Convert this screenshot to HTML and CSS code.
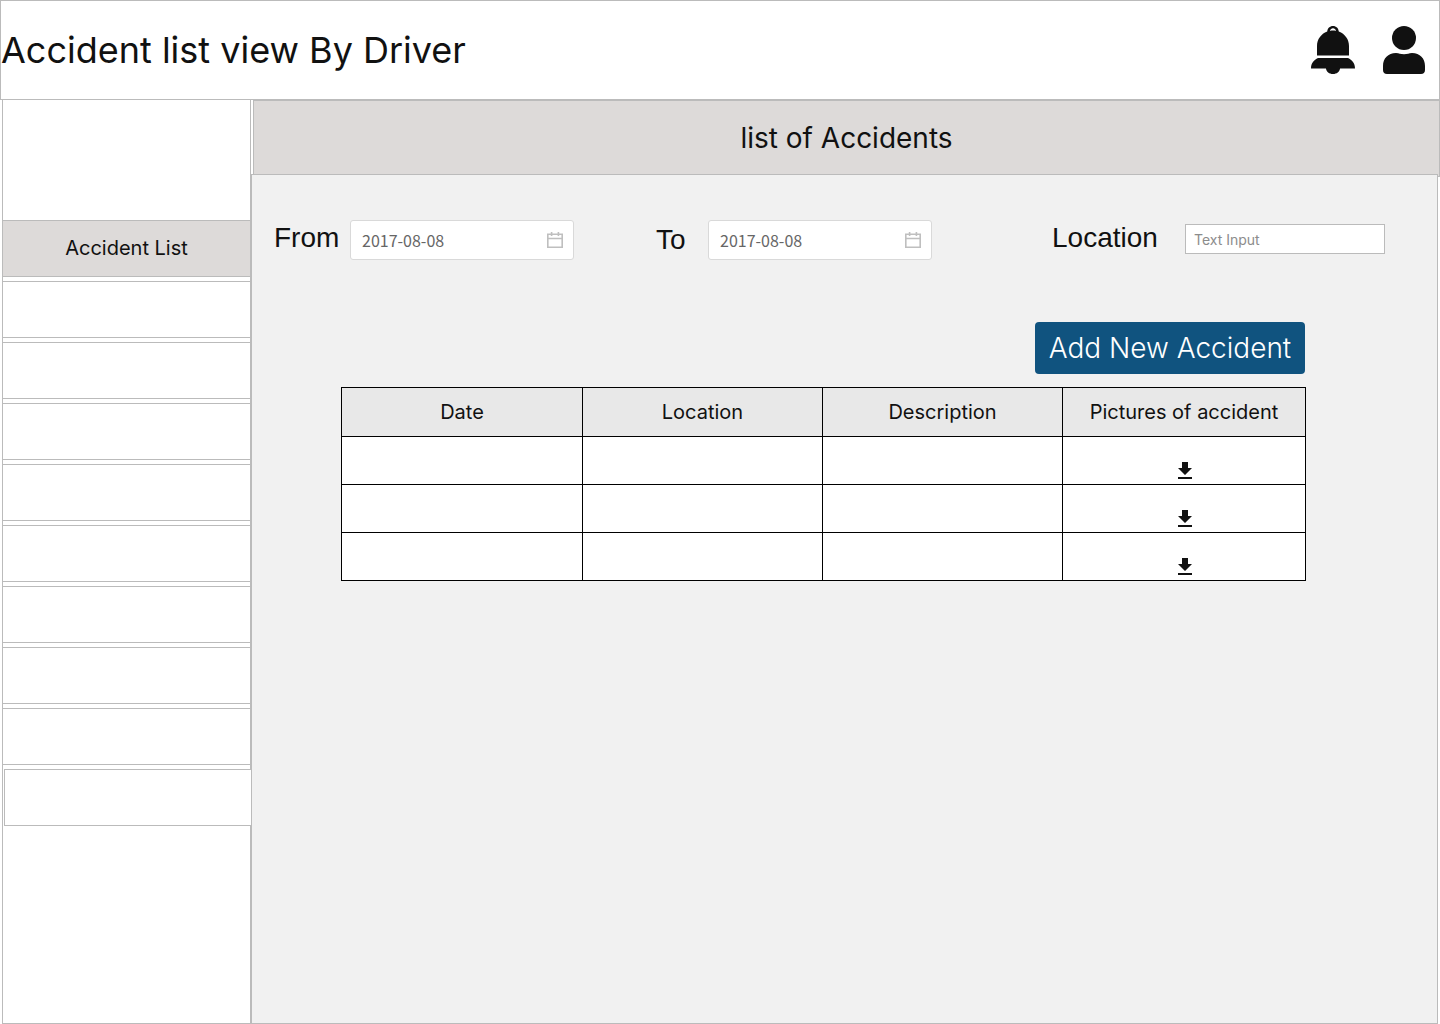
FILE: index.html
```html
<!DOCTYPE html>
<html lang="en">
<head>
<meta charset="utf-8">
<title>Accident list view By Driver</title>
<link rel="stylesheet" href="styles.css">
</head>
<body>
<svg class="sprite" aria-hidden="true">
  <symbol id="calendar" viewBox="0 0 16 16">
    <path fill="none" stroke="currentColor" stroke-width="1.6" d="M.8 2.300h14.400v12.900H.8zM.8 6.500h14.400M4.600 0v4M11.400 0v4"/>
  </symbol>
  <symbol id="download" viewBox="0 0 14 17">
    <path fill="currentColor" d="M4 0h6v6h4l-7 7-7-7h4zM0 15h14v2H0z"/>
  </symbol>
</svg>
<header class="topbar">
  <h1 class="topbar-title">Accident list view By Driver</h1>
  <div class="topbar-actions">
    <button class="icon-button" type="button" aria-label="Notifications">
      <svg width="44" height="48" viewBox="0 0 44 48" fill="currentColor">
        <path fill-rule="evenodd" d="M16.200 5.600C16.500 2.200 18.800 0 22 0s5.500 2.200 5.800 5.600C34 8 38 13.500 38 20v9.500H6V20C6 13.500 10 8 16.200 5.600zM19 5c2-.6 4-.6 6 0C24.600 3.200 23.500 2.300 22 2.300S19.400 3.200 19 5z"/>
        <path d="M7 32h30c4 2 7 5 7 10.500H29C28.600 45.800 25.800 48 22 48s-6.600-2.200-7-5.500H0C0 37 3 34 7 32z"/>
      </svg>
    </button>
    <button class="icon-button" type="button" aria-label="Profile">
      <svg width="42" height="48" viewBox="0 0 42 48" fill="currentColor">
        <circle cx="21" cy="12" r="12"/>
        <path d="M13 27c3 0 4.500 1.300 8 1.300S26 27 29 27c8 0 13 5.500 13 13v4c0 2.500-1.500 4-4 4H4c-2.500 0-4-1.500-4-4v-4c0-7.500 5-13 13-13z"/>
      </svg>
    </button>
  </div>
</header>
<div class="layout">
  <nav class="sidebar" aria-label="Main">
    <a class="nav-item nav-item-active" href="#accidents">Accident List</a>
    <div class="nav-item"></div>
    <div class="nav-item"></div>
    <div class="nav-item"></div>
    <div class="nav-item"></div>
    <div class="nav-item"></div>
    <div class="nav-item"></div>
    <div class="nav-item"></div>
    <div class="nav-item"></div>
    <div class="nav-item nav-item-last"></div>
  </nav>
  <main class="main" id="accidents">
    <h2 class="banner">list of Accidents</h2>
    <section class="panel">
      <form class="filters">
        <div class="field">
          <label class="field-label label-from" for="from">From</label>
          <div class="date-box">
            <input class="date-input" id="from" type="text" value="2017-08-08">
            <svg class="date-icon" width="16" height="16"><use href="#calendar"/></svg>
          </div>
        </div>
        <div class="field">
          <label class="field-label label-to" for="to">To</label>
          <div class="date-box">
            <input class="date-input" id="to" type="text" value="2017-08-08">
            <svg class="date-icon" width="16" height="16"><use href="#calendar"/></svg>
          </div>
        </div>
        <div class="field field-location">
          <label class="field-label label-location" for="location">Location</label>
          <input class="text-input" id="location" type="text" placeholder="Text Input">
        </div>
      </form>
      <div class="records">
        <button class="add-button" type="button">Add New Accident</button>
        <table class="table">
          <thead>
            <tr><th class="col-date">Date</th><th>Location</th><th>Description</th><th class="col-pictures">Pictures of accident</th></tr>
          </thead>
          <tbody>
            <tr><td></td><td></td><td></td><td><button class="download" type="button" aria-label="Download pictures"><svg width="14" height="17"><use href="#download"/></svg></button></td></tr>
            <tr><td></td><td></td><td></td><td><button class="download" type="button" aria-label="Download pictures"><svg width="14" height="17"><use href="#download"/></svg></button></td></tr>
            <tr><td></td><td></td><td></td><td><button class="download" type="button" aria-label="Download pictures"><svg width="14" height="17"><use href="#download"/></svg></button></td></tr>
          </tbody>
        </table>
      </div>
    </section>
  </main>
</div>
</body>
</html>
```
FILE: styles.css
```css
* { box-sizing: border-box; }

body {
  display: flex;
  flex-direction: column;
  min-height: 100vh;
  margin: 0;
  background: #fff;
  color: #111;
  font-family: Inter, "Liberation Sans", sans-serif;
}

button {
  padding: 0;
  border: 0;
  background: none;
  color: inherit;
  font-family: inherit;
  cursor: pointer;
}

svg { display: block; }

.sprite { display: none; }

.topbar {
  display: flex;
  align-items: center;
  justify-content: space-between;
  height: 100px;
  padding-right: 14px;
  border: 1px solid #bbb;
}

.topbar-title {
  margin: 0;
  font-size: 36px;
  font-weight: 400;
  line-height: 44px;
}

.topbar-actions {
  display: flex;
  gap: 28px;
}

.layout {
  display: flex;
  flex: 1;
  padding-left: 2px;
}

.sidebar {
  display: flex;
  flex: none;
  flex-direction: column;
  gap: 4px;
  width: 249px;
  padding-top: 120px;
  border: 1px solid #bbb;
  border-top: 0;
}

.nav-item {
  display: flex;
  align-items: center;
  justify-content: center;
  height: 57px;
  margin: 0 -1px;
  padding-bottom: 2px;
  border: 1px solid #bbb;
  background: #fff;
  color: #111;
  font-size: 20px;
  line-height: 24px;
  text-decoration: none;
}

.nav-item-active { background: #dddad9; }

.nav-item-last {
  z-index: 1;
  margin: 0 -2px 0 1px;
}

.main {
  display: flex;
  flex: 1;
  flex-direction: column;
}

.banner {
  display: flex;
  align-items: center;
  justify-content: center;
  height: 77px;
  margin: 0 0 -3px 2px;
  padding-bottom: 2px;
  border: 1px solid #bbb;
  background: #dddad9;
  font-size: 28px;
  font-weight: 400;
  line-height: 34px;
}

.panel {
  flex: 1;
  margin-right: 2px;
  padding-top: 45px;
  border: 1px solid #bbb;
  background: #f1f1f1;
}

.filters {
  display: flex;
  gap: 82px;
  padding: 0 52px 0 22px;
}

.field {
  display: flex;
  align-items: center;
  height: 40px;
}

.field-location {
  height: 38px;
  margin-left: auto;
}

.field-label {
  padding-bottom: 4px;
  font-family: "Liberation Sans", sans-serif;
  font-size: 28px;
  line-height: 32px;
}

.label-from { width: 76px; }
.label-to { width: 52px; padding-bottom: 0; }
.label-location { width: 133px; padding-bottom: 2px; }

.date-box {
  display: flex;
  align-items: center;
  width: 224px;
  height: 40px;
  padding: 0 10px 0 11px;
  border: 1px solid #d9d9d9;
  border-radius: 3px;
  background: #fff;
}

.date-input {
  flex: 1;
  min-width: 0;
  padding: 0;
  border: 0;
  background: none;
  color: #666;
  font-family: "Noto Sans CJK SC", sans-serif;
  font-size: 16px;
}

.date-icon {
  flex: none;
  color: #bfbfbf;
}

.text-input {
  width: 200px;
  height: 30px;
  padding: 0 8px;
  border: 1px solid #bbb;
  border-radius: 0;
  background: #fff;
  font-family: inherit;
  font-size: 14px;
}

.text-input::placeholder { color: #8c8c8c; }

.records {
  display: flex;
  flex-direction: column;
  align-items: flex-end;
  gap: 13px;
  padding: 62px 131px 0 89px;
}

.add-button {
  width: 270px;
  height: 52px;
  margin-right: 1px;
  border-radius: 4px;
  background: #10537f;
  color: #fff;
  font-size: 28px;
  font-weight: 300;
}

.table {
  width: 100%;
  border-collapse: collapse;
  table-layout: fixed;
  background: #fff;
}

.table th,
.table td {
  height: 48px;
  padding: 0;
  border: 1px solid #000;
}

.table th {
  height: 49px;
  background: #e8e8e8;
  font-size: 20px;
  font-weight: 400;
}

.table .col-date { width: 241px; }

.table .col-pictures { width: 243px; }

.table td {
  padding: 0 0 5px 2px;
  vertical-align: bottom;
}

.download {
  display: block;
  margin: 0 auto;
}
```
